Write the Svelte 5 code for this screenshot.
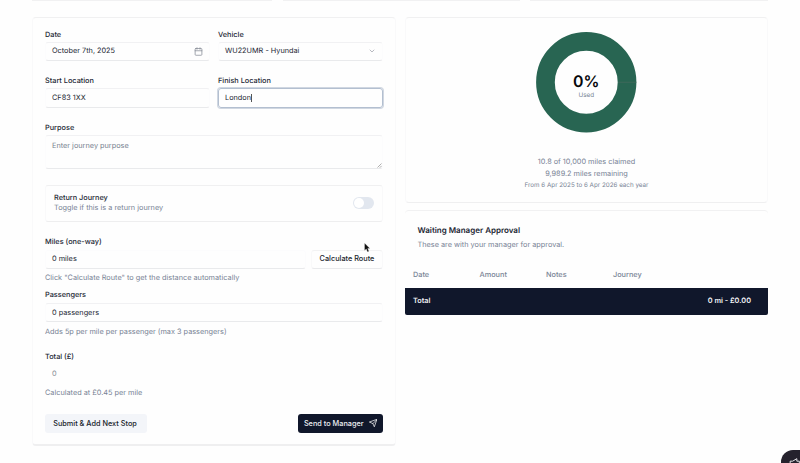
<script>
  const stats = [240, 237, 238];
  const columns = [
    { name: 'Date', width: 66.5 },
    { name: 'Amount', width: 66.5 },
    { name: 'Notes', width: 67 },
    { name: 'Journey', width: 146 }
  ];
</script>

<div class="page">
  <div class="stats">
    {#each stats as width}
      <div class="stat" style="width: {width}px"></div>
    {/each}
  </div>

  <div class="layout">
    <form class="card journey">
      <div class="row">
        <div class="field">
          <label for="date">Date</label>
          <div class="control" id="date">
            <span>October 7th, 2025</span>
            <svg class="cal" viewBox="0 0 24 24" fill="none" stroke="#858b96" stroke-width="2" stroke-linecap="round"><rect x="3" y="4" width="18" height="18" rx="2" /><path d="M16 2v4M8 2v4M3 10h18" /></svg>
          </div>
        </div>
        <div class="field">
          <label for="vehicle">Vehicle</label>
          <div class="control select" id="vehicle">
            <span>WU22UMR - Hyundai</span>
            <svg class="chev" viewBox="0 0 24 24" fill="none" stroke="#9da1aa" stroke-width="2.2" stroke-linecap="round" stroke-linejoin="round"><path d="m6 9 6 6 6-6" /></svg>
          </div>
        </div>
      </div>

      <div class="row second">
        <div class="field">
          <label for="start">Start Location</label>
          <div class="control" id="start"><span>CF83 1XX</span></div>
        </div>
        <div class="field">
          <label for="finish">Finish Location</label>
          <div class="control focused" id="finish"><span>London</span><i class="caret"></i></div>
        </div>
      </div>

      <div class="field purpose">
        <label for="purpose">Purpose</label>
        <div class="control area" id="purpose">
          <span>Enter journey purpose</span>
          <svg class="grip" viewBox="0 0 5 5" stroke="#8d8d8d" stroke-width=".7"><path d="M.5 4.5l4-4M2.8 4.7l1.9-1.9" /></svg>
        </div>
      </div>

      <div class="toggle-box">
        <div>
          <div class="strong">Return Journey</div>
          <div class="muted">Toggle if this is a return journey</div>
        </div>
        <div class="switch"><div class="thumb"></div></div>
      </div>

      <div class="field miles">
        <label for="miles">Miles (one-way)</label>
        <div class="inline">
          <div class="control" id="miles"><span>0 miles</span></div>
          <button type="button" class="route">Calculate Route</button>
        </div>
        <div class="muted help">Click "Calculate Route" to get the distance automatically</div>
      </div>

      <div class="field passengers">
        <label for="passengers">Passengers</label>
        <div class="control" id="passengers"><span>0 passengers</span></div>
        <div class="muted help">Adds 5p per mile per passenger (max 3 passengers)</div>
      </div>

      <div class="field total">
        <label for="total">Total (£)</label>
        <div class="control disabled" id="total"><span>0</span></div>
        <div class="muted help">Calculated at £0.45 per mile</div>
      </div>

      <div class="actions">
        <button type="button" class="next">Submit &amp; Add Next Stop</button>
        <button type="button" class="send">
          <span>Send to Manager</span>
          <svg viewBox="0 0 24 24" fill="none" stroke="#fff" stroke-width="2" stroke-linejoin="round" stroke-linecap="round"><path d="M22 2 15 22l-4-9-9-4ZM22 2 11 13" /></svg>
        </button>
      </div>
    </form>

    <div class="side">
      <section class="card usage">
        <svg class="ring" viewBox="0 0 100 100">
          <circle cx="50" cy="50" r="40.6" fill="none" stroke="#286552" stroke-width="18.6" />
          <path d="M81.6 50H100" stroke="#4c6b60" stroke-width=".6" />
          <text x="50" y="54.9" text-anchor="middle" class="percent">0%</text>
          <text x="50" y="64.8" text-anchor="middle" class="used">Used</text>
        </svg>
        <p>10.8 of 10,000 miles claimed</p>
        <p>9,989.2 miles remaining</p>
        <p class="period">From 6 Apr 2025 to 6 Apr 2026 each year</p>
      </section>

      <section class="card approval">
        <h2>Waiting Manager Approval</h2>
        <p class="muted sub">These are with your manager for approval.</p>
        <div class="thead">
          {#each columns as col}
            <span style="width: {col.width}px">{col.name}</span>
          {/each}
        </div>
        <div class="tfoot"><span>Total</span><span>0 mi - £0.00</span></div>
      </section>
    </div>
  </div>

  <div class="widget">
    <svg viewBox="0 0 16 12" fill="none" stroke="#e6e4e8" stroke-width="1.2"><path d="M1 12V5h3l5-3v3h3v7" /></svg>
  </div>
  <svg class="pointer" viewBox="0 0 12 18"><path d="M1 0v15l3.5-3 2.5 6 3-1.3-2.5-5.7H12Z" fill="#111" stroke="#fff" stroke-width=".6" /></svg>
</div>

<style>
  :global(body) { margin: 0; background: #fefefe; }
  .page {
    position: relative;
    width: 800px;
    height: 463px;
    overflow: hidden;
    box-sizing: border-box;
    padding-left: 32px;
    background: #fefefe;
    color: #222633;
    font: 7.32px/10px Inter, sans-serif;
    text-rendering: geometricPrecision;
  }
  .page * { box-sizing: border-box; }
  .stats { display: flex; gap: 10.5px; height: 17px; }
  .stat { height: 1px; background: #f1f1f2; }
  .layout { display: flex; gap: 9px; align-items: flex-start; }
  .card { border: 1px solid #f9f9fa; border-top-color: #f0f0f1; border-bottom-color: #efeff0; border-radius: 4px; }
  .journey { width: 364px; height: 429px; padding: 10px 12px 0; border-bottom-width: 2px; }
  .row { display: flex; gap: 8px; }
  .row .field { width: 165px; }
  .second { margin-top: 14px; }
  label { display: block; height: 12px; line-height: 11px; font-weight: 500; margin-bottom: 1.5px; }
  .row:first-child label { line-height: 13px; }
  .control {
    display: flex;
    align-items: center;
    height: 19px;
    padding: 0 6px;
    border: 1px solid #fcfcfd;
    border-top-color: #f1f1f3;
    border-bottom-color: #e9eaec;
    border-radius: 3px;
  }
  .row .control { height: 19.5px; margin-bottom: -.5px; }
  .control span { flex: none; }
  .cal { width: 9px; height: 9px; margin-left: auto; }
  .chev { width: 8px; height: 8px; margin-left: auto; }
  .focused { border: 1px solid #b3bfd0; box-shadow: 0 0 0 1px #d0d7e1; }
  .caret { width: 1px; height: 8px; background: #555; margin-left: -.5px; }
  .purpose { margin-top: 14.5px; }
  .area { position: relative; align-items: flex-start; height: 34px; padding-top: 4.6px; color: #788290; }
  .grip { position: absolute; right: 0; bottom: 0; width: 5px; height: 5px; }
  .toggle-box {
    display: flex;
    align-items: center;
    justify-content: space-between;
    height: 37px;
    margin-top: 15.5px;
    padding: 0 8px;
    border: 1px solid #f9f9fa;
    border-top-color: #f0f0f1;
    border-bottom-color: #eeeeef;
    border-radius: 3px;
  }
  .strong { font-weight: 500; }
  .muted { color: #788395; }
  .switch { width: 21px; height: 12px; padding: .8px; border-radius: 6px; background: #e2e7ef; }
  .thumb { width: 10.4px; height: 10.4px; border-radius: 50%; background: #fff; }
  .miles { margin-top: 14.5px; }
  .inline { display: flex; gap: 5px; }
  .inline .control { width: 261px; border-top-color: #fcfcfd; }
  button { display: flex; align-items: center; justify-content: center; font: inherit; font-weight: 500; color: #181d2b; height: 19px; padding: 0; border: 0; border-radius: 3px; white-space: nowrap; }
  .route { width: 72px; background: #fefefe; border: 1px solid #f9f9fa; border-top-color: #f2f2f3; border-bottom-color: #e9eaec; }
  .help { margin-top: 4.5px; height: 10px; }
  .passengers { margin-top: 6px; }
  .passengers label { margin-bottom: 2px; line-height: 12px; }
  .total { margin-top: 14.5px; }
  .disabled { color: #868c97; border-color: transparent; }
  .actions { display: flex; justify-content: space-between; margin-top: 16px; }
  .next { width: 102px; padding-right: 2px; background: #f3f5f9; }
  .send { width: 85px; gap: 5px; background: #10172b; color: #eef0f4; }
  .send svg { width: 8.5px; height: 8.5px; }
  .side { width: 363px; }
  .usage { display: flex; flex-direction: column; align-items: center; height: 186px; padding-top: 14px; color: #788395; }
  .ring { width: 100.5px; height: 100.5px; margin-bottom: 23px; }
  .percent { font-size: 15.8px; font-weight: 600; fill: #07080b; }
  .used { font-size: 6.3px; fill: #788395; }
  p, h2 { margin: 0; }
  .usage p { height: 12.5px; line-height: 12.5px; }
  .usage .period { font-size: 6.27px; height: 10px; line-height: 9px; }
  .approval { height: 104px; margin-top: 7px; border-color: transparent; border-top-color: #f1f1f2; border-width: 1px 0 0; }
  h2 { padding: 13px 0 0 12.5px; font-size: 8px; line-height: 12.5px; height: 25px; font-weight: 600; }
  .sub { padding: 4px 0 0 12.5px; }
  .thead { display: flex; height: 37.5px; padding: 20px 8px 0; color: #788395; font-weight: 500; }
  .thead span { flex: none; }
  .tfoot { display: flex; align-items: center; justify-content: space-between; height: 27px; padding: 0 17px 0 8px; border-radius: 0 0 2px 2px; background: #10172b; color: #f1f2f5; font-weight: 600; }
  .widget { position: absolute; left: 781px; top: 450px; width: 30px; height: 30px; border-radius: 12px; background: #25222d; }
  .widget svg { position: absolute; left: 8px; top: 7px; width: 14px; height: 10px; }
  .pointer { position: absolute; left: 364px; top: 242.5px; width: 6px; height: 9px; }
</style>
